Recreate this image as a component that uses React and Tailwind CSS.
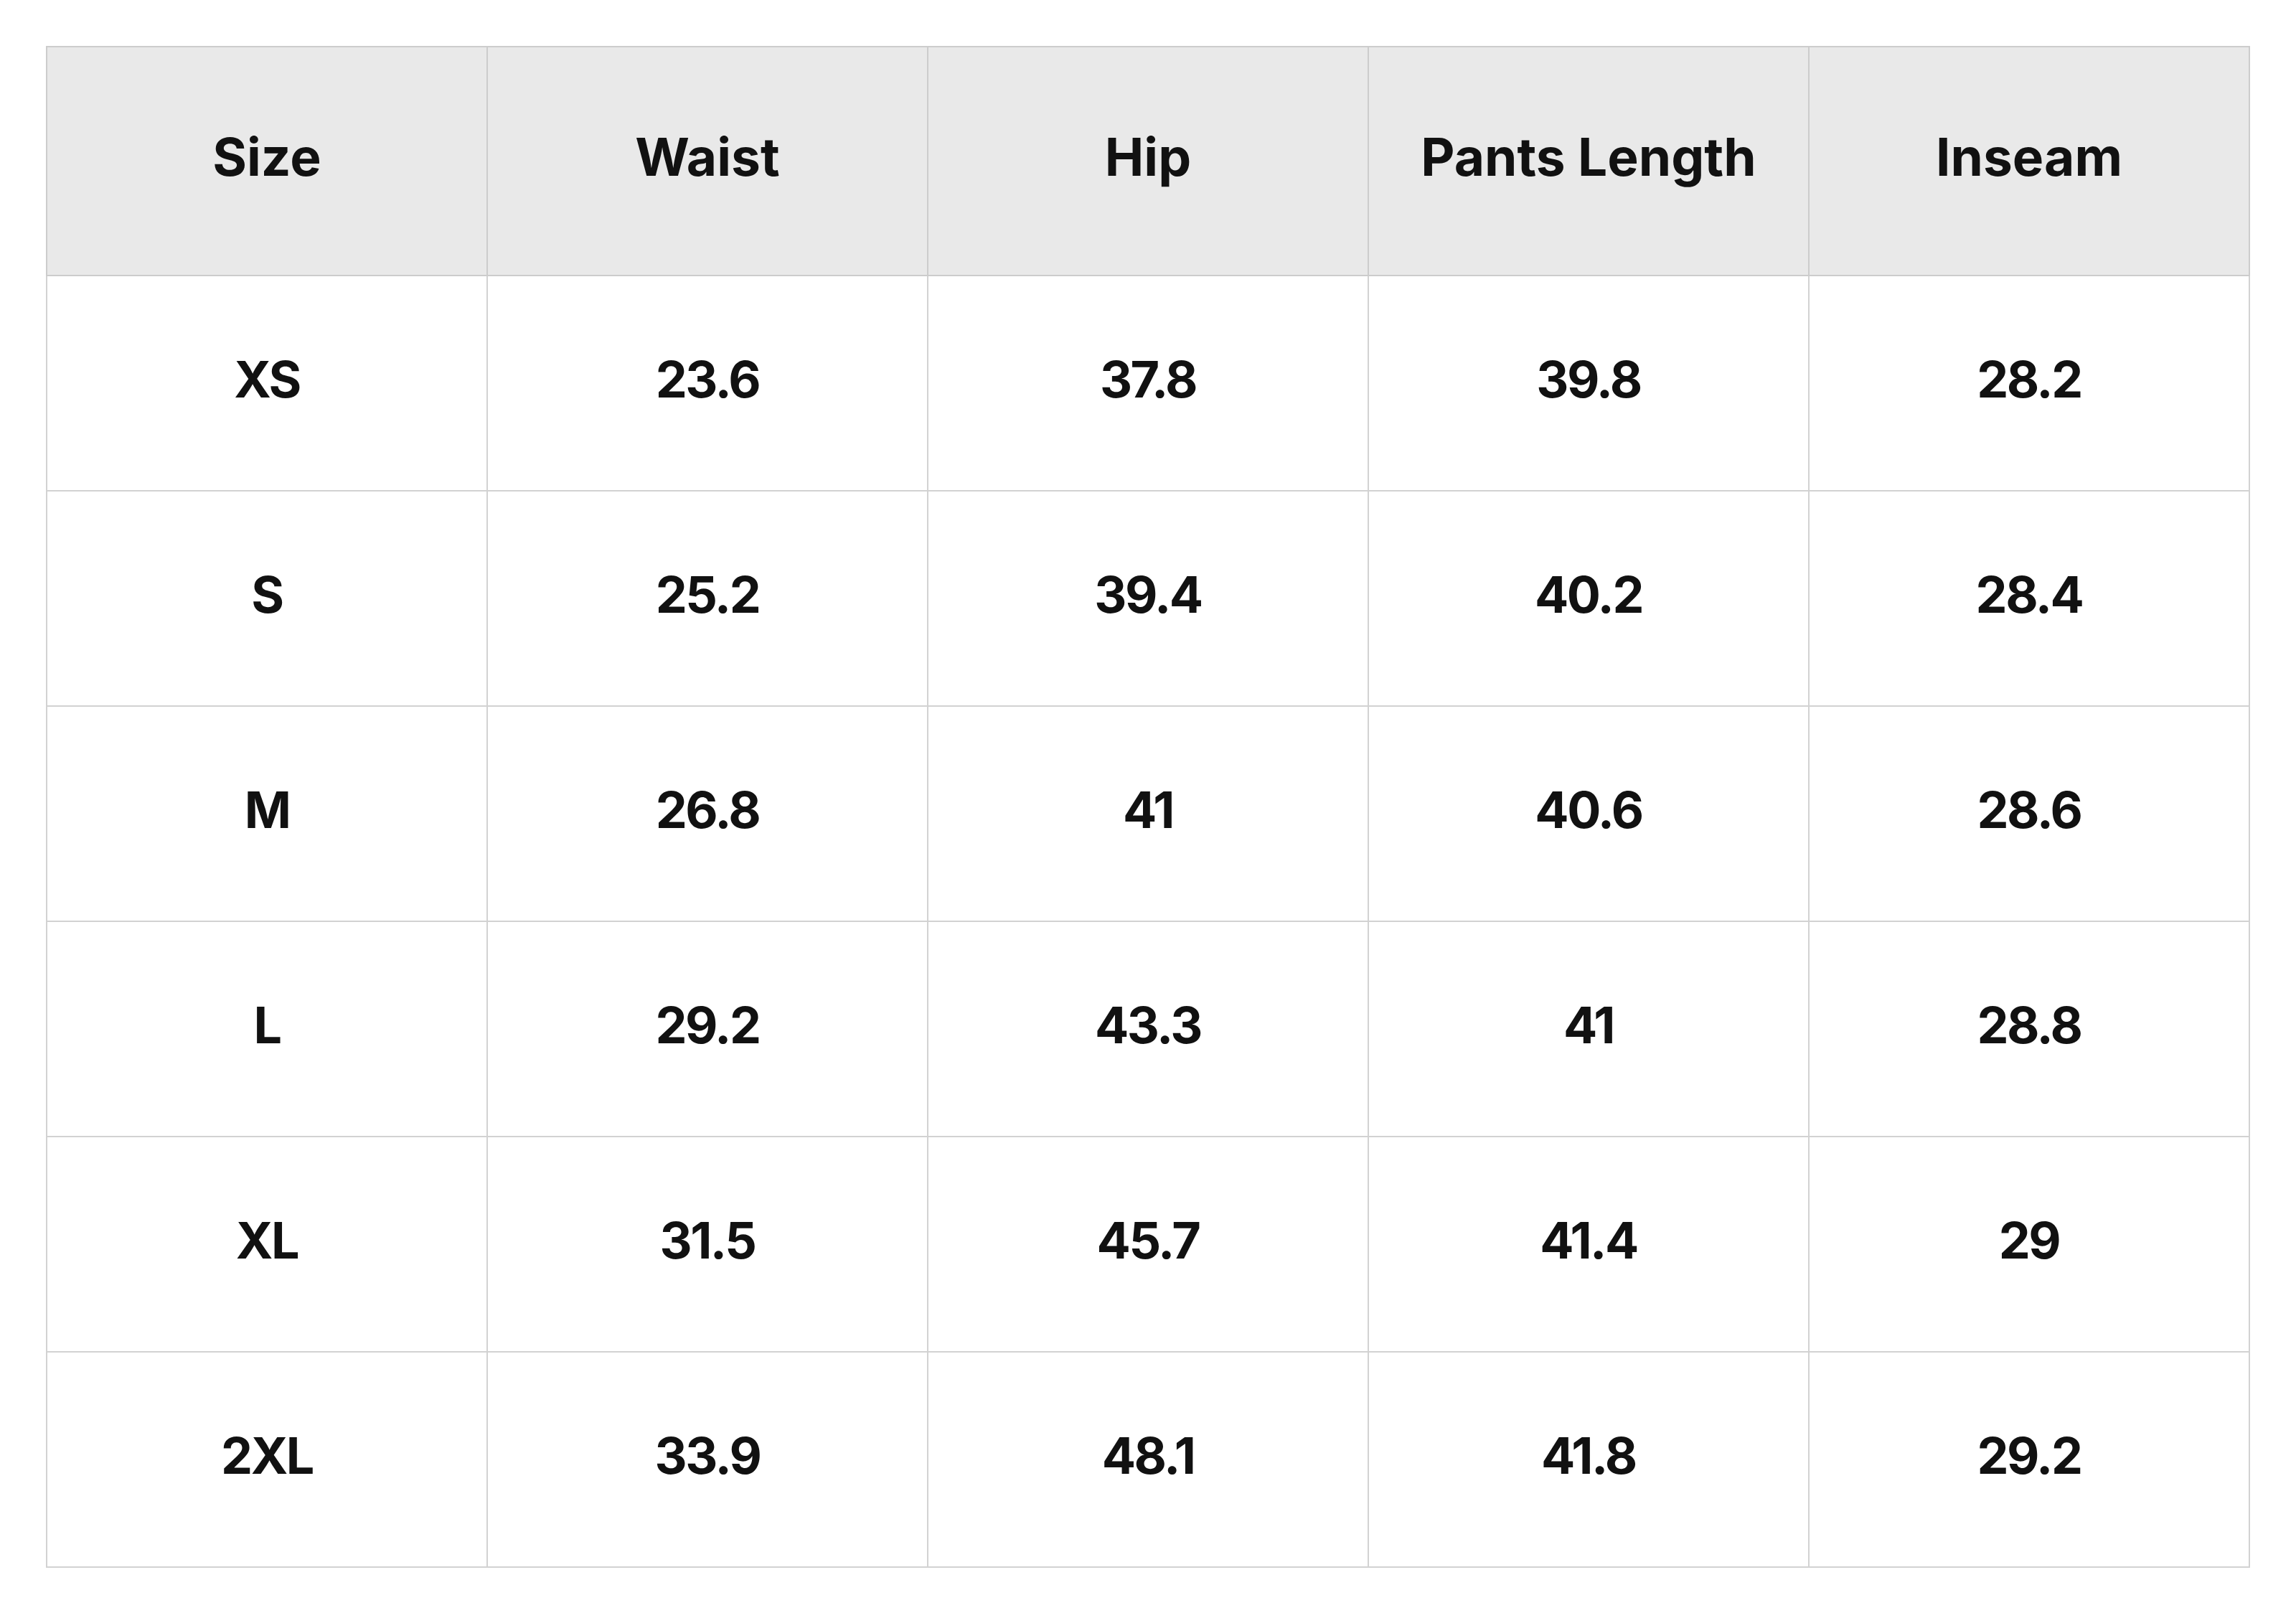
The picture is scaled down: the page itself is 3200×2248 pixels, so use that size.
const headers = ["Size", "Waist", "Hip", "Pants Length", "Inseam"];

const rows = [
  ["XS", "23.6", "37.8", "39.8", "28.2"],
  ["S", "25.2", "39.4", "40.2", "28.4"],
  ["M", "26.8", "41", "40.6", "28.6"],
  ["L", "29.2", "43.3", "41", "28.8"],
  ["XL", "31.5", "45.7", "41.4", "29"],
  ["2XL", "33.9", "48.1", "41.8", "29.2"],
];

function App() {
  return (
    <div className="bg-white p-[64px] font-['Inter',sans-serif] text-[#111111]">
      <table className="w-full table-fixed border-collapse border-2 border-[#c8c8c8]">
        <thead>
          <tr className="bg-[#e9e9e9]">
            {headers.map((h) => (
              <th
                key={h}
                className="h-[319px] border-2 border-[#cccccc] pb-[12px] text-center text-[73px] font-bold tracking-[0px]"
              >
                {h}
              </th>
            ))}
          </tr>
        </thead>
        <tbody>
          {rows.map((row) => (
            <tr key={row[0]}>
              {row.map((cell, i) => (
                <td
                  key={i}
                  className="h-[300px] border-2 border-[#d2d2d2] pb-[12px] text-center text-[70px] font-bold tracking-[-2.5px]"
                >
                  {cell}
                </td>
              ))}
            </tr>
          ))}
        </tbody>
      </table>
    </div>
  );
}

export default App;
